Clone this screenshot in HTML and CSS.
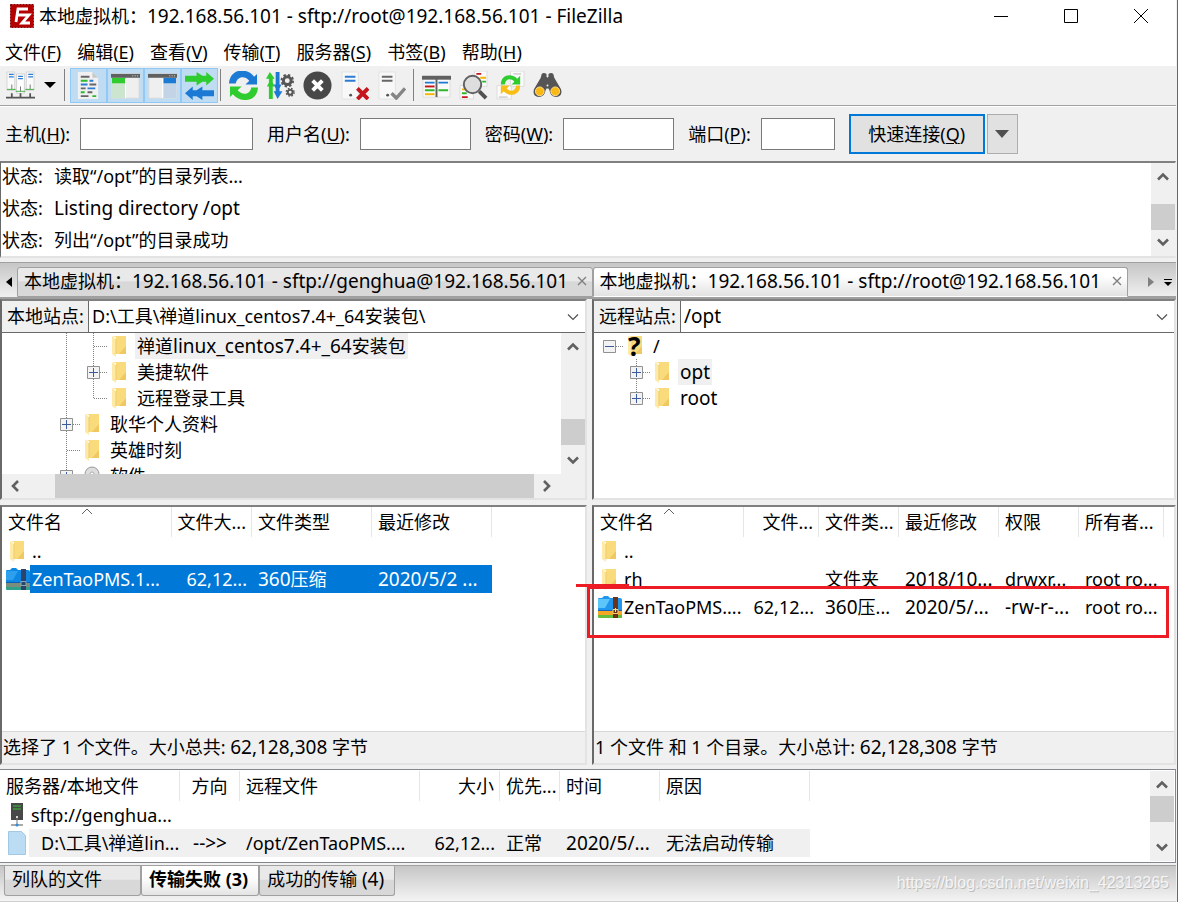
FILE: index.html
```html
<!DOCTYPE html>
<html lang="zh-CN">
<head>
<meta charset="utf-8">
<meta name="viewport" content="width=device-width, initial-scale=1">
<title>FileZilla</title>
<link rel="stylesheet" href="styles.css">
</head>
<body>
<svg class="defs" aria-hidden="true">
  <symbol id="folder" viewBox="0 0 16 22"><path d="M1 1h14v18H5V2z" fill="#fadb7b"/><path d="M8 19h7v-8z" fill="#efc862"/><path d="M1 1l4 3v18l-4-3z" fill="#ffe9a6"/><path d="M5 4v15" stroke="#edcb70"/></symbol>
  <symbol id="up" viewBox="0 0 12 12"><path d="M1 8.500l5-5 5 5" fill="none" stroke="#606060" stroke-width="2.600"/></symbol>
  <symbol id="down" viewBox="0 0 12 12"><path d="M1 3.500l5 5 5-5" fill="none" stroke="#606060" stroke-width="2.600"/></symbol>
  <symbol id="left" viewBox="0 0 12 12"><path d="M9 1L4 6l5 5" fill="none" stroke="#606060" stroke-width="2.600"/></symbol>
  <symbol id="right" viewBox="0 0 12 12"><path d="M3 1l5 5-5 5" fill="none" stroke="#606060" stroke-width="2.600"/></symbol>
  <symbol id="drop" viewBox="0 0 12 8"><path d="M1 1.500l5 5 5-5" fill="none" stroke="#505050" stroke-width="1.200"/></symbol>
  <symbol id="sort" viewBox="0 0 12 7"><path d="M1 6l5-5 5 5" fill="none" stroke="#606060"/></symbol>
  <symbol id="close" viewBox="0 0 10 10"><path d="M1 1l8 8M9 1L1 9" stroke="#808080" stroke-width="1.400"/></symbol>
  <symbol id="plus" viewBox="0 0 13 13"><path d="M.5.5h12v12H.5z" fill="#f3f3f3" stroke="#919191"/><path d="M2 6.500h9M6.500 2v9" stroke="#3c5a9e"/></symbol>
  <symbol id="minus" viewBox="0 0 13 13"><path d="M.5.5h12v12H.5z" fill="#f3f3f3" stroke="#919191"/><path d="M2 6.500h9" stroke="#3c5a9e"/></symbol>
  <symbol id="zip" viewBox="0 0 24 22"><path d="M0 3q0-1 1-1h3l2-2h4l2 2h10q2 0 2 2v11H0z" fill="#2196ee"/><path d="M0 3h12L7 12H0z" fill="#5cc6fb"/><path d="M0 15h24v4H0z" fill="#f5a623"/><path d="M0 19h24v3H1q-1 0-1-1z" fill="#65bd3c"/><path d="M0 14.500h24" stroke="#1467b8"/><path d="M15 1h5v21h-5z" fill="#6b3318"/><path d="M15 13.500h5v4h-5z" fill="none" stroke="#f4d27a"/><path d="M17.500 12v4" stroke="#f8e3a0"/></symbol>
  <symbol id="zip-selected" viewBox="0 0 24 22"><path d="M0 3q0-1 1-1h3l2-2h4l2 2h10q2 0 2 2v11H0z" fill="#0e86e4"/><path d="M0 3h12L7 12H0z" fill="#2ca0ec"/><path d="M0 15h24v4H0z" fill="#7b8e7b"/><path d="M0 19h24v3H1q-1 0-1-1z" fill="#2fa08a"/><path d="M0 14.500h24" stroke="#0a60b8"/><path d="M15 1h5v21h-5z" fill="#2b4468"/><path d="M15 13.500h5v4h-5z" fill="none" stroke="#86a8bd"/></symbol>
</svg>

<div class="app">
  <header class="titlebar">
    <svg class="logo" viewBox="0 0 24 24"><path d="M.5.5h23v23H.5z" fill="#b30000" stroke="#8b0000" stroke-dasharray="2 1"/><path d="M6 18L8 5h10M7.500 11H14M11 11h8l-7 8h8" fill="none" stroke="#fff" stroke-width="2.800"/></svg>
    <h1>本地虚拟机：<span class="latin">192.168.56.101 - sftp://root@192.168.56.101 - FileZilla</span></h1>
    <div class="window-buttons">
      <button aria-label="最小化"><svg viewBox="0 0 16 16"><path d="M1 8.500h14" stroke="#000"/></svg></button>
      <button aria-label="最大化"><svg viewBox="0 0 16 16"><path d="M1.500 1.500h13v13h-13z" fill="none" stroke="#000"/></svg></button>
      <button aria-label="关闭"><svg viewBox="0 0 16 16"><path d="M1 1l14 14M15 1L1 15" stroke="#000"/></svg></button>
    </div>
  </header>

  <nav class="menu">
    <button>文件(<u>F</u>)</button><button>编辑(<u>E</u>)</button><button>查看(<u>V</u>)</button><button>传输(<u>T</u>)</button><button>服务器(<u>S</u>)</button><button>书签(<u>B</u>)</button><button>帮助(<u>H</u>)</button>
  </nav>

  <div class="toolbar">
    <button aria-label="站点管理器"><svg viewBox="0 0 30 30"><path d="M1 1h8v19H1zM21 1h8v19h-8z" fill="#fafafa" stroke="#d5d5d5"/><path d="M11 3h8v20h-8z" fill="#fff" stroke="#d0d0d0"/><path d="M3 3.500h5M3 6h5M23 3.500h5M23 6h5M12.500 5.500h5M12.500 8h5" stroke="#2b7cd3" stroke-width="1.300"/><path d="M6 14v5M25 14v5M15 16v5" stroke="#777"/><path d="M1 19h9M20 19h9M10 21h10" stroke="#3fae3f"/><path d="M0 27.500h30M6 23v4M15 23v4M25 23v4" stroke="#555" stroke-width="1.800"/></svg></button>
    <button class="narrow" aria-label="站点列表"><svg class="caret" viewBox="0 0 12 7"><path d="M0 0h12L6 6z"/></svg></button>
    <span class="separator"></span>
    <button class="on" aria-label="消息日志"><svg viewBox="0 0 30 30"><path d="M4 1h15l6 6v22H4z" fill="#f1f1f1"/><path d="M19 1v6h6z" fill="#c8c8c8"/><path d="M7 6h9M16 14h7M7 18h5M14 22h5M7 26h8" stroke="#666" stroke-width="2"/><path d="M7 10h7M7 22h4M19 26h4" stroke="#2eb82e" stroke-width="2"/><path d="M16 10h4M7 14h7M14 18h8" stroke="#2b7cd3" stroke-width="2"/></svg></button>
    <button class="on" aria-label="本地目录树"><svg viewBox="0 0 30 30"><path d="M1 3h28v25H1z" fill="#efefef" stroke="#ddd"/><path d="M1 7h14v6H1z" fill="#2ecc2e"/><path d="M1 13h14v15H1z" fill="#cbe5cf"/><path d="M15 8v20" stroke="#fff"/><path d="M0 3h30v4H0z" fill="#606060"/><path d="M22 5h6" stroke="#ddd" stroke-dasharray="1 1.500"/></svg></button>
    <button class="on" aria-label="远程目录树"><svg viewBox="0 0 30 30"><path d="M1 3h28v25H1z" fill="#efefef" stroke="#ddd"/><path d="M16 7h13v6H16z" fill="#1a7ad4"/><path d="M16 13h13v15H16z" fill="#c3d4e6"/><path d="M15 8v20" stroke="#fff"/><path d="M0 3h30v4H0z" fill="#606060"/><path d="M22 5h6" stroke="#ddd" stroke-dasharray="1 1.500"/></svg></button>
    <button class="on" aria-label="传输队列"><svg viewBox="0 0 30 30"><path d="M0 5h12V1l6 4h4V1l8 7-8 7v-4h-4l-6 4v-4H0z" fill="#2ecc2e"/><path d="M30 20H18v-4l-6 4H8v-4l-8 7 8 7v-4h4l6 4v-4h12z" fill="#1d7ad4"/></svg></button>
    <span class="separator"></span>
    <button aria-label="刷新"><svg viewBox="0 0 30 30"><path d="M0 13C1-3 19-4 26 6l3-3v11H17l4-4c-5-6-13-4-14 3z" fill="#1d7ad4"/><path d="M30 17c-1 16-19 16-26 7l-3 3V16h12l-4 4c5 6 13 4 14-3z" fill="#2ecc2e"/></svg></button>
    <button aria-label="处理队列"><svg viewBox="0 0 30 30"><path d="M3 29V16H1l2-4V8H0l4-7 5 7H7v4l2 4H7v13z" fill="#2ecc2e"/><path d="M10 1h4v13h2l-2 4v3h3l-5 8-4-8h2v-3l-2-4h2z" fill="#1d7ad4"/><g fill="none" stroke="#555"><circle cx="22" cy="10" r="4" stroke-width="3"/><circle cx="22" cy="10" r="6" stroke-width="2" stroke-dasharray="2.500 2.200"/><circle cx="25" cy="22" r="2.500" stroke-width="2"/><circle cx="25" cy="22" r="4" stroke-width="1.500" stroke-dasharray="1.700 1.500"/></g></svg></button>
    <button aria-label="取消"><svg viewBox="0 0 30 30"><circle cx="15" cy="15" r="14.500" fill="#484848"/><path d="M10 10l10 10M20 10L10 20" stroke="#fff" stroke-width="4"/></svg></button>
    <button aria-label="断开连接"><svg viewBox="0 0 30 30"><path d="M2 1h17v28H2z" fill="#f8f8f8" stroke="#e2e2e2"/><path d="M5 6h11M5 10h11" stroke="#2b7cd3" stroke-width="2"/><circle cx="11" cy="25" r="1.500" fill="#555"/><path d="M18 18l11 11M29 18L18 29" stroke="#c4161c" stroke-width="4"/></svg></button>
    <button aria-label="重新连接"><svg viewBox="0 0 30 30"><path d="M2 1h17v28H2z" fill="#f8f8f8" stroke="#e2e2e2"/><path d="M5 6h11M5 10h11" stroke="#666" stroke-width="2"/><circle cx="11" cy="25" r="1.500" fill="#555"/><path d="M15 23l5 5 9-10" fill="none" stroke="#858585" stroke-width="3.500"/></svg></button>
    <span class="separator"></span>
    <button aria-label="目录比较"><svg viewBox="0 0 30 30"><path d="M1 5h28v22H1z" fill="#fafafa" stroke="#ddd"/><path d="M0 5h30v4H0z" fill="#606060"/><path d="M3 12h10M17 12h10" stroke="#1d7ad4" stroke-width="2"/><path d="M3 16h10" stroke="#c4161c" stroke-width="2"/><path d="M3 20h10M17 20h10" stroke="#2eb82e" stroke-width="2"/><path d="M3 24h10" stroke="#f5b400" stroke-width="2"/><path d="M15 8v19" stroke="#606060" stroke-width="2"/></svg></button>
    <button aria-label="文件名过滤"><svg viewBox="0 0 30 30"><path d="M16 0h13v16H16zM1 15h14v14H1z" fill="#fafafa" stroke="#ddd"/><path d="M18 3h5M3 27h6" stroke="#c4161c" stroke-width="2"/><path d="M22 7h6M3 19h5" stroke="#f5b400" stroke-width="2"/><path d="M3 23h5M24 11h4" stroke="#2eb82e" stroke-width="2"/><circle cx="14" cy="14" r="9" fill="#dedede" stroke="#606060" stroke-width="2"/><path d="M21 21l7 7" stroke="#505050" stroke-width="4"/></svg></button>
    <button aria-label="同步浏览"><svg viewBox="0 0 30 30"><path d="M15 0h14v16H15zM1 15h15v14H1z" fill="#fafafa" stroke="#ddd"/><path d="M18 3h8M3 27h9" stroke="#d5d5d5" stroke-width="2"/><path d="M5 14C5 3 17 2 22 8l3-3v9h-9l3-3c-4-4-9-3-10 3z" fill="#2ecc2e"/><path d="M25 15c0 11-12 12-17 6l-3 3v-9h9l-3 3c4 4 9 3 10-3z" fill="#f9be16"/></svg></button>
    <button aria-label="搜索文件"><svg viewBox="0 0 30 30"><path d="M9 3q2-2 5 0v3l1 1 1-1V3q3-2 5 0l1 4 7 12q2 7-5 8-6 0-7-7l-1-2h-2l-1 2q-1 7-7 7-7-1-5-8L8 7z" fill="#555"/><circle cx="7" cy="21" r="4.500" fill="#f9b814" stroke="#ffe08a"/><circle cx="23" cy="21" r="4.500" fill="#f9b814" stroke="#ffe08a"/><circle cx="15" cy="15" r="1" fill="#eee"/></svg></button>
  </div>

  <form class="quickconnect">
    <label for="host">主机(<u>H</u>):</label><input id="host" class="host" type="text">
    <label for="user">用户名(<u>U</u>):</label><input id="user" class="user" type="text">
    <label for="pass">密码(<u>W</u>):</label><input id="pass" class="user" type="password">
    <label for="port">端口(<u>P</u>):</label><input id="port" class="port" type="text">
    <button type="button" class="connect">快速连接(<u>Q</u>)</button>
    <button type="button" class="history" aria-label="历史记录"><svg viewBox="0 0 14 8"><path d="M0 0h14L7 8z" fill="#505050"/></svg></button>
  </form>

  <section class="log">
    <div class="log-lines">
      <p><span class="kind">状态:</span>读取“/opt”的目录列表...</p>
      <p><span class="kind">状态:</span><span class="latin">Listing directory /opt</span></p>
      <p><span class="kind">状态:</span>列出“/opt”的目录成功</p>
    </div>
    <div class="vscroll"><svg><use href="#up"/></svg><i class="thumb log-thumb"></i><svg><use href="#down"/></svg></div>
  </section>

  <div class="site-tabs">
    <button class="tab-arrow" aria-label="向左"><svg viewBox="0 0 6 10"><path d="M6 0v10L0 5z"/></svg></button>
    <button class="site-tab first"><span>本地虚拟机：<span class="latin">192.168.56.101 - sftp://genghua@192.168.56.101</span></span><svg class="x"><use href="#close"/></svg></button>
    <button class="site-tab second active"><span>本地虚拟机：<span class="latin">192.168.56.101 - sftp://root@192.168.56.101</span></span><svg class="x"><use href="#close"/></svg></button>
    <div class="tab-tools">
      <button aria-label="向右"><svg viewBox="0 0 6 10"><path d="M0 0v10l6-5z" fill="#808080"/></svg></button>
      <button aria-label="标签列表"><svg viewBox="0 0 8 10"><path d="M0 2h8v1H0zM0 5h8L4 9z"/></svg></button>
    </div>
  </div>

  <main class="panes">
    <section class="panel">
      <div class="address"><label for="local">本地站点:</label><input id="local" type="text" value="D:\工具\禅道linux_centos7.4+_64安装包\"><button aria-label="展开"><svg><use href="#drop"/></svg></button></div>
      <div class="tree-area">
        <div class="tree-column">
          <ul class="tree local-tree">
            <li><i class="v"></i><i class="v h"></i><svg><use href="#folder"/></svg><span class="current">禅道<b class="latin">linux_centos7.4+_64</b>安装包</span></li>
            <li><i class="v"></i><i class="v h"><svg><use href="#plus"/></svg></i><svg><use href="#folder"/></svg><span>美捷软件</span></li>
            <li><i class="v"></i><i class="end h"></i><svg><use href="#folder"/></svg><span>远程登录工具</span></li>
            <li><i class="v h"><svg><use href="#plus"/></svg></i><svg><use href="#folder"/></svg><span>耿华个人资料</span></li>
            <li><i class="v h"></i><svg><use href="#folder"/></svg><span>英雄时刻</span></li>
            <li><i class="v h"><svg><use href="#plus"/></svg></i><svg viewBox="0 0 16 22"><circle cx="8" cy="9" r="7" fill="#ddd" stroke="#999"/><circle cx="8" cy="9" r="2" fill="#fff" stroke="#aaa"/></svg><span>软件</span></li>
          </ul>
          <div class="hscroll"><svg><use href="#left"/></svg><i class="thumb"></i><svg><use href="#right"/></svg></div>
        </div>
        <div class="vscroll with-corner"><svg><use href="#up"/></svg><i class="thumb tree-thumb"></i><svg><use href="#down"/></svg></div>
      </div>
    </section>

    <section class="panel">
      <div class="address"><label for="remote">远程站点:</label><input id="remote" class="latin" type="text" value="/opt"><button aria-label="展开"><svg><use href="#drop"/></svg></button></div>
      <ul class="tree remote-tree">
        <li><i class="h"><svg><use href="#minus"/></svg></i><span class="unknown"><svg><use href="#folder"/></svg><strong>?</strong></span><span>/</span></li>
        <li><i></i><i class="v h"><svg><use href="#plus"/></svg></i><svg><use href="#folder"/></svg><span class="current latin">opt</span></li>
        <li><i></i><i class="end h"><svg><use href="#plus"/></svg></i><svg><use href="#folder"/></svg><span class="latin">root</span></li>
      </ul>
    </section>

    <section class="panel files">
      <table class="local-files">
        <colgroup><col class="w28"><col class="w142"><col class="w80"><col class="w120"><col class="w120"></colgroup>
        <thead><tr><th colspan="2">文件名<svg class="sort"><use href="#sort"/></svg></th><th class="num">文件大...</th><th>文件类型</th><th>最近修改</th></tr></thead>
        <tbody>
          <tr><td class="icon"><svg class="folder"><use href="#folder"/></svg></td><td class="name">..</td><td></td><td></td><td></td></tr>
          <tr class="selected"><td class="icon"><svg class="zip"><use href="#zip-selected"/></svg></td><td class="name">ZenTaoPMS.1...</td><td class="num">62,12...</td><td><span class="latin">360</span>压缩</td><td class="latin">2020/5/2 ...</td></tr>
        </tbody>
      </table>
      <p class="status">选择了 1 个文件。大小总共: <span class="latin">62,128,308</span> 字节</p>
    </section>

    <section class="panel files">
      <table class="remote-files">
        <colgroup><col class="w28"><col class="w122"><col class="w75"><col class="w80"><col class="w100"><col class="w80"><col class="w85"></colgroup>
        <thead><tr><th colspan="2">文件名<svg class="sort"><use href="#sort"/></svg></th><th class="num">文件...</th><th>文件类...</th><th>最近修改</th><th>权限</th><th>所有者...</th></tr></thead>
        <tbody>
          <tr><td class="icon"><svg class="folder"><use href="#folder"/></svg></td><td class="name">..</td><td></td><td></td><td></td><td></td><td></td></tr>
          <tr><td class="icon"><svg class="folder"><use href="#folder"/></svg></td><td class="name">rh</td><td></td><td>文件夹</td><td class="latin">2018/10...</td><td>drwxr...</td><td>root ro...</td></tr>
          <tr><td class="icon"><svg class="zip"><use href="#zip"/></svg></td><td class="name">ZenTaoPMS....</td><td class="num">62,12...</td><td><span class="latin">360</span>压...</td><td class="latin">2020/5/...</td><td class="latin">-rw-r-...</td><td>root ro...</td></tr>
        </tbody>
      </table>
      <p class="status">1 个文件 和 1 个目录。大小总计: <span class="latin">62,128,308</span> 字节</p>
      <div class="mark-line"></div>
      <div class="mark-box"></div>
    </section>
  </main>

  <section class="queue">
    <div class="queue-list">
      <table>
        <colgroup><col class="w29"><col class="w151"><col class="w60"><col class="w180"><col class="w80"><col class="w60"><col class="w100"><col class="w150"></colgroup>
        <thead><tr><th colspan="2">服务器/本地文件</th><th class="mid">方向</th><th>远程文件</th><th class="num">大小</th><th>优先...</th><th>时间</th><th>原因</th></tr></thead>
        <tbody>
          <tr><td class="icon"><svg class="node" viewBox="0 0 18 24"><path d="M3 0h12v17H3z" fill="#484848"/><path d="M5 3h8M5 6h8" stroke="#35c435"/><path d="M9 14v7" stroke="#777"/><circle cx="9" cy="14" r="1" fill="#fff"/><path d="M3 22h12" stroke="#555"/><circle cx="9" cy="22" r="1.500" fill="#2b8de0"/></svg></td><td class="name" colspan="2">sftp://genghua...</td><td></td><td></td><td></td><td></td><td></td></tr>
          <tr class="current"><td class="icon"><svg class="node" viewBox="0 0 18 24"><path d="M.5.5h13l4 4v19H.5z" fill="#bcdcf4" stroke="#a3c8e4"/></svg></td><td class="deep">D:\工具\禅道lin...</td><td class="mid latin">--&gt;&gt;</td><td>/opt/ZenTaoPMS....</td><td class="num">62,12...</td><td>正常</td><td class="latin">2020/5/...</td><td>无法启动传输</td></tr>
        </tbody>
      </table>
    </div>
    <div class="vscroll"><svg><use href="#up"/></svg><i class="thumb queue-thumb"></i><svg><use href="#down"/></svg></div>
  </section>

  <footer class="queue-tabs">
    <button>列队的文件</button><button class="active">传输失败 (3)</button><button>成功的传输 <span class="latin">(4)</span></button>
    <span class="watermark">https://blog.csdn.net/weixin_42313265</span>
  </footer>
</div>
</body>
</html>
```
FILE: styles.css
```css
* { box-sizing: border-box; }
body {
  margin: 0;
  background: #fff;
  color: #000;
  font: 18px/26px "Noto Sans", "Noto Sans CJK SC", sans-serif;
  white-space: nowrap;
}
button, input { font: inherit; color: inherit; margin: 0; padding: 0; border: 0; background: none; border-radius: 0; }
h1, p, ul { margin: 0; padding: 0; list-style: none; font-weight: 400; }
svg { display: block; flex: none; }
i { display: block; flex: none; }
u { text-underline-offset: 2px; text-decoration-thickness: 1px; }
.latin { font-size: 19px; font-weight: 400; }
.defs { position: absolute; width: 0; height: 0; }

.app {
  display: flex;
  flex-direction: column;
  min-height: 100vh;
  margin-right: 1px;
  padding-right: 1px;
  border-right: 1px solid #696969;
  background: #f0f0f0;
}

/* Title and menu */
.titlebar { display: flex; align-items: center; height: 31px; padding-left: 10px; gap: 5px; background: #fff; }
.logo { width: 24px; height: 24px; }
h1 { font-size: 18px; }
.window-buttons { display: flex; margin-left: auto; }
.window-buttons button { display: grid; place-items: center; width: 70px; height: 32px; }
.window-buttons svg { width: 16px; height: 16px; }
.menu { display: flex; gap: 16px; height: 35px; padding: 7px 5px 0; background: #fff; }

/* Toolbar */
.toolbar { display: flex; align-items: center; height: 41px; padding-left: 2px; padding-bottom: 2px; border-bottom: 1px solid #fff; box-shadow: inset 0 -1px #a0a0a0; }
.toolbar button { display: grid; place-items: center; width: 37px; height: 35px; }
.toolbar button svg { width: 29px; height: 29px; }
.toolbar .narrow { width: 22px; }
.toolbar .narrow .caret { width: 12px; height: 7px; }
.toolbar .on { background: #c0dcf3; border: 1px solid #90c8f6; }
.separator { width: 1px; height: 32px; margin: 0 4px 0 3px; background: #808080; }
.narrow + .separator { margin-right: 5px; }
.toolbar .on + .separator { margin-left: 2px; }

/* Quick connect */
.quickconnect { display: flex; align-items: center; height: 54px; padding-left: 5px; }
.quickconnect input { height: 32px; border: 1px solid #7a7a7a; background: #fff; margin: 0 14px 0 10px; }
.quickconnect .host { width: 173px; }
.quickconnect .user { width: 111px; }
.quickconnect .port { width: 74px; }
.connect { width: 136px; height: 40px; border: 2px solid #0078d7; background: #e1e1e1; }
.history { display: grid; place-items: center; width: 31px; height: 40px; margin-left: 2px; border: 1px solid #adadad; background: #e1e1e1; }
.history svg { width: 14px; height: 8px; }

/* Scrollbars */
.vscroll { display: flex; flex-direction: column; align-items: center; width: 24px; padding: 8px 0; background: #f0f0f0; flex: none; }
.vscroll svg, .hscroll svg { width: 12px; height: 12px; }
.vscroll svg:last-child { margin-top: auto; }
.thumb { background: #cdcdcd; }
.vscroll .thumb { width: 24px; height: 26px; }
.log-thumb { margin-top: 21px; }
.tree-thumb { margin-top: 66px; }
.queue-thumb { margin-top: 5px; }
.hscroll { display: flex; align-items: center; height: 24px; padding-left: 7px; gap: 7px; background: #f0f0f0; flex: none; }
.hscroll .thumb { flex: 1; height: 24px; margin-left: 27px; }
.hscroll svg:last-child { margin-right: 8px; }
.with-corner { padding-bottom: 32px; }

/* Message log */
.log { display: flex; height: 97px; margin-bottom: 4px; border: solid; border-width: 2px 1px 2px 1px; border-color: #808080 #f0f0f0 #e3e3e3 #696969; background: #fff; }
.log-lines { display: flex; flex-direction: column; justify-content: flex-end; flex: 1; overflow: hidden; }
.log p { display: flex; line-height: 32px; padding-left: 1px; }
.kind { width: 52px; }

/* Site tabs */
.site-tabs { display: flex; height: 37px; padding-top: 4px; border-top: 1px solid #a0a0a0; border-bottom: 2px solid #a0a0a0; background: linear-gradient(#c6c6c6, #f0f0f0); }
.tab-arrow { width: 17px; display: grid; place-items: center; }
.tab-arrow svg { width: 6px; height: 10px; }
.site-tab { display: flex; align-items: center; justify-content: space-between; min-width: 0; height: 30px; padding: 0 5px 3px 6px; border: 1px solid #a0a0a0; border-radius: 3px 3px 0 0; background: linear-gradient(#e9e9e9 45%, #d8d8d8 50%); }
.first { flex: 576 1 0; }
.second { flex: 535 1 0; }
.site-tab.active { background: linear-gradient(#fff 30%, #e2e2e2); border-bottom-color: transparent; }
.x { width: 10px; height: 10px; }
.tab-tools { display: flex; align-items: center; justify-content: flex-end; gap: 9px; width: 48px; height: 30px; padding-right: 4px; border-bottom: 1px solid #a0a0a0; }
.tab-tools svg { width: 8px; height: 10px; }

/* Local and remote panes */
.panes { display: grid; flex: 1; grid-template-columns: minmax(0, 587fr) minmax(0, 584fr); grid-template-rows: 200fr 259fr; gap: 5px; margin-bottom: 4px; }
.panel { display: flex; flex-direction: column; min-width: 0; min-height: 0; position: relative; border: 2px solid; border-color: #808080 #e3e3e3 #e3e3e3 #696969; background: #fff; }
.address { display: flex; height: 32px; border-bottom: 1px solid #696969; flex: none; }
.address label { width: 87px; padding: 2px 0 0 5px; border-right: 1px solid #696969; background: #f0f0f0; }
.address input { flex: 1; min-width: 0; padding: 0 0 1px 3px; outline: 0; }
.address button { width: 24px; display: grid; place-items: center; }
.address svg { width: 12px; height: 8px; }
.tree-area { display: flex; flex: 1; min-height: 0; }
.tree-column { display: flex; flex-direction: column; flex: 1; min-width: 0; }
.tree { flex: 1 1 0; min-height: 0; overflow: hidden; }
.local-tree { padding-left: 51px; }
.remote-tree { padding-left: 2px; }
.tree li { display: flex; align-items: center; height: 26px; }
.tree i { display: grid; place-items: center; width: 27px; height: 26px; background-repeat: no-repeat; }
.tree i svg { width: 13px; height: 13px; margin: 0; }
.tree svg { width: 16px; height: 22px; margin: 0 8px 0 4px; }
.tree span { padding: 0 2px; }
.tree .current { background: #f0f0f0; }
.v { background-image: repeating-linear-gradient(#808080 0 1px, transparent 1px 2px); background-size: 1px 100%; background-position: 13px 0; }
.h { background-image: repeating-linear-gradient(90deg, #808080 0 1px, transparent 1px 2px); background-size: 13px 1px; background-position: 14px 13px; }
.v.h, .end.h { background-image: repeating-linear-gradient(#808080 0 1px, transparent 1px 2px), repeating-linear-gradient(90deg, #808080 0 1px, transparent 1px 2px); background-position: 13px 0, 14px 13px; }
.v.h { background-size: 1px 100%, 13px 1px; }
.end.h { background-size: 1px 13px, 13px 1px; }
.tree .unknown { display: grid; padding: 0; align-items: center; }
.unknown svg, .unknown strong { grid-area: 1 / 1; }
.unknown strong { font-size: 26px; line-height: 26px; padding-left: 5px; }

/* File tables */
table { border-collapse: separate; border-spacing: 0; table-layout: fixed; width: 0; }
th, td { padding: 0 0 0 6px; text-align: left; font-weight: 400; line-height: 28px; height: 28px; overflow: hidden; }
th { height: 30px; line-height: 30px; border-right: 1px solid #e5e5e5; position: relative; }
.num { text-align: right; padding: 0 5px 0 0; }
.mid { text-align: center; padding: 0; }
.icon { padding: 0 0 0 4px; }
.name { padding-left: 2px; }
.deep { padding-left: 12px; }
.sort { position: absolute; left: 79px; top: 1px; width: 12px; height: 7px; }
.remote-files .sort { left: 69px; }
.folder { width: 16px; height: 22px; margin-left: 3px; }
.zip { width: 24px; height: 22px; }
.queue .icon { padding-left: 8px; }
.node { width: 18px; height: 24px; }
.selected td:not(.icon) { background: #0078d7; color: #fff; }
.current td:not(.icon) { background: #f0f0f0; }
.w28 { width: 28px; } .w29 { width: 29px; } .w60 { width: 60px; } .w75 { width: 75px; } .w80 { width: 80px; } .w85 { width: 85px; }
.w100 { width: 100px; } .w120 { width: 120px; } .w122 { width: 122px; } .w142 { width: 142px; } .w150 { width: 150px; } .w151 { width: 151px; } .w180 { width: 180px; }
.status { margin-top: auto; height: 32px; padding: 2px 1px 0; border-top: 1px solid #d7d7d7; background: #f0f0f0; }

/* Red annotation drawn over the remote list */
.mark-box { position: absolute; top: 79px; left: -7px; right: 5px; height: 52px; border: 3px solid #ed1c24; }
.mark-line { position: absolute; top: 77px; left: -18px; width: 53px; height: 3px; background: #ed1c24; }

/* Transfer queue */
.queue { display: flex; height: 94px; border: 1px solid #828790; border-left: 0; padding: 1px 1px 1px 0; background: #fff; }
.queue-list { flex: 1; min-width: 0; overflow: hidden; }
.queue-tabs { display: flex; align-items: flex-start; height: 37px; margin-top: 2px; padding-left: 4px; border-top: 1px solid #a0a0a0; border-bottom: 1px solid #d0d0d0; background: linear-gradient(#c6c6c6, #f4f4f4); }
.queue-tabs button { height: 30px; padding: 0 10px 3px 7px; border: 1px solid #a0a0a0; border-top: 0; border-radius: 0 0 3px 3px; background: linear-gradient(#e9e9e9 45%, #d8d8d8 50%); }
.queue-tabs button:first-child { padding-right: 38px; }
.queue-tabs .active { background: linear-gradient(#fff 40%, #e4e4e4); font-weight: 700; padding-right: 10px; }
.watermark { margin-left: auto; padding: 4px 7px 0 0; font: 16px/26px "Liberation Sans", Arial, sans-serif; color: #f4f4f4; text-shadow: 1px 1px #bdbdbd; }
```
